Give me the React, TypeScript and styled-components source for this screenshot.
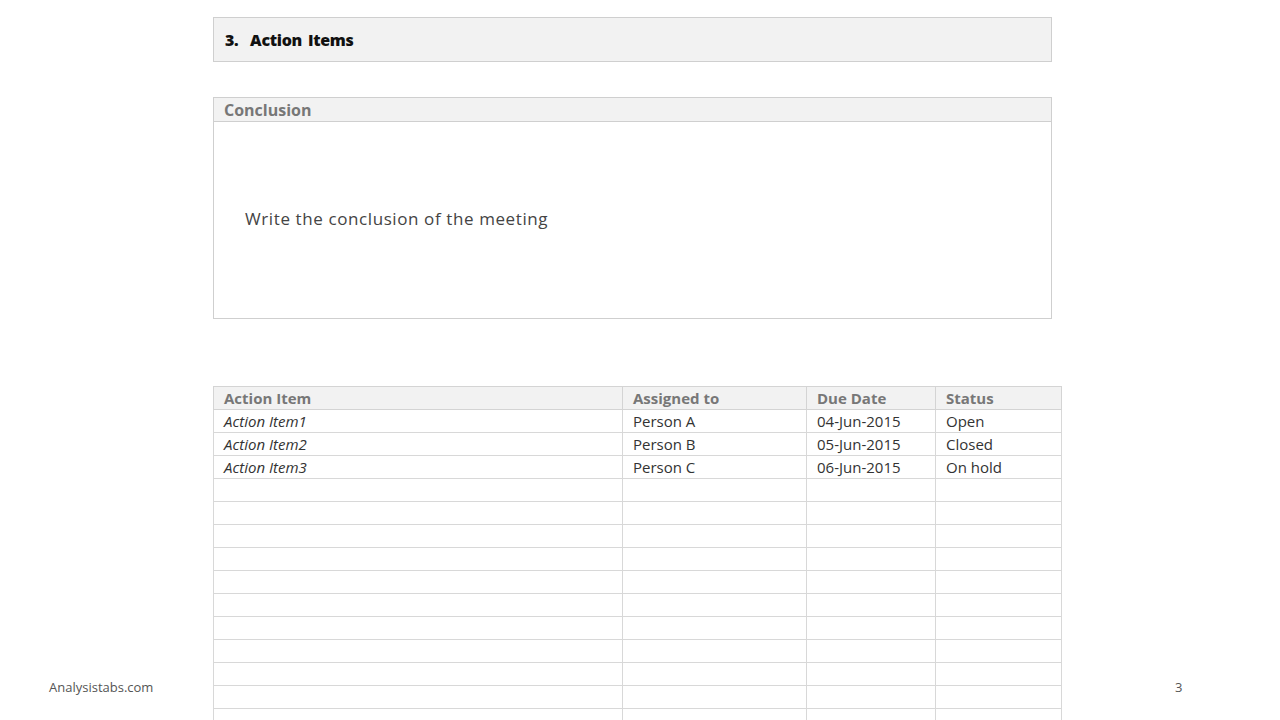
import React from "react";
import styled, { createGlobalStyle } from "styled-components";

const Global = createGlobalStyle`
  body { margin: 0; background: #fff; font-family: "Open Sans", "Liberation Sans", sans-serif; }
`;

const Slide = styled.div`
  position: relative;
  width: 1280px;
  height: 720px;
  overflow: hidden;
  background: #fff;
`;

const Content = styled.div`
  padding: 17px 0 0 213px;
  display: flex;
  flex-direction: column;
`;

const SectionBar = styled.div`
  width: 839px;
  height: 45px;
  box-sizing: border-box;
  border: 1px solid #cfcfcf;
  background: #f2f2f2;
  display: flex;
  align-items: center;
  padding-left: 11px;
  font-weight: 800;
  font-size: 16px;
  color: #111;
  letter-spacing: -0.3px;
  word-spacing: 2px;
`;

const Box = styled.div`
  margin-top: 35px;
  width: 839px;
  height: 222px;
  box-sizing: border-box;
  border: 1px solid #cfcfcf;
  display: flex;
  flex-direction: column;
`;

const BoxHead = styled.div`
  height: 23px;
  background: #f2f2f2;
  border-bottom: 1px solid #cfcfcf;
  padding-left: 10px;
  display: flex;
  align-items: center;
  font-weight: 700;
  font-size: 16px;
  color: #777;
`;

const BoxBody = styled.div`
  flex: 1;
  display: flex;
  align-items: center;
  padding: 0 0 4px 31px;
  font-size: 17px;
  letter-spacing: 0.6px;
  color: #444;
`;

const Table = styled.table`
  margin-top: 67px;
  width: 848px;
  border-collapse: collapse;
  table-layout: fixed;
  font-size: 15px;
`;

const Th = styled.th`
  height: 22px;
  background: #f2f2f2;
  border: 1.5px solid #d4d4d4;
  text-align: left;
  padding: 0 10px;
  font-weight: 700;
  color: #777;
  overflow: hidden;
  white-space: nowrap;
`;

const Td = styled.td<{ italic?: boolean }>`
  height: 22px;
  border: 1.5px solid #d8d8d8;
  padding: 0 10px;
  color: #333;
  font-style: ${(p) => (p.italic ? "italic" : "normal")};
  white-space: nowrap;
  overflow: hidden;
`;

const Footer = styled.div<{ left: number }>`
  position: absolute;
  left: ${(p) => p.left}px;
  top: 678px;
  font-size: 13px;
  color: #555;
`;

const rows = [
  ["Action Item1", "Person A", "04-Jun-2015", "Open"],
  ["Action Item2", "Person B", "05-Jun-2015", "Closed"],
  ["Action Item3", "Person C", "06-Jun-2015", "On hold"],
  ...Array.from({ length: 11 }, () => ["", "", "", ""]),
];

export default function App() {
  return (
    <Slide>
      <Global />
      <Content>
        <SectionBar>3.&nbsp; Action Items</SectionBar>
        <Box>
          <BoxHead>Conclusion</BoxHead>
          <BoxBody>Write the conclusion of the meeting</BoxBody>
        </Box>
        <Table>
          <colgroup>
            <col style={{ width: 409 }} />
            <col style={{ width: 184 }} />
            <col style={{ width: 129 }} />
            <col style={{ width: 126 }} />
          </colgroup>
          <thead>
            <tr>
              <Th>Action Item</Th>
              <Th>Assigned to</Th>
              <Th>Due Date</Th>
              <Th>Status</Th>
            </tr>
          </thead>
          <tbody>
            {rows.map((r, i) => (
              <tr key={i}>
                <Td italic>{r[0]}</Td>
                <Td>{r[1]}</Td>
                <Td>{r[2]}</Td>
                <Td>{r[3]}</Td>
              </tr>
            ))}
          </tbody>
        </Table>
      </Content>
      <Footer left={49}>Analysistabs.com</Footer>
      <Footer left={1175}>3</Footer>
    </Slide>
  );
}
